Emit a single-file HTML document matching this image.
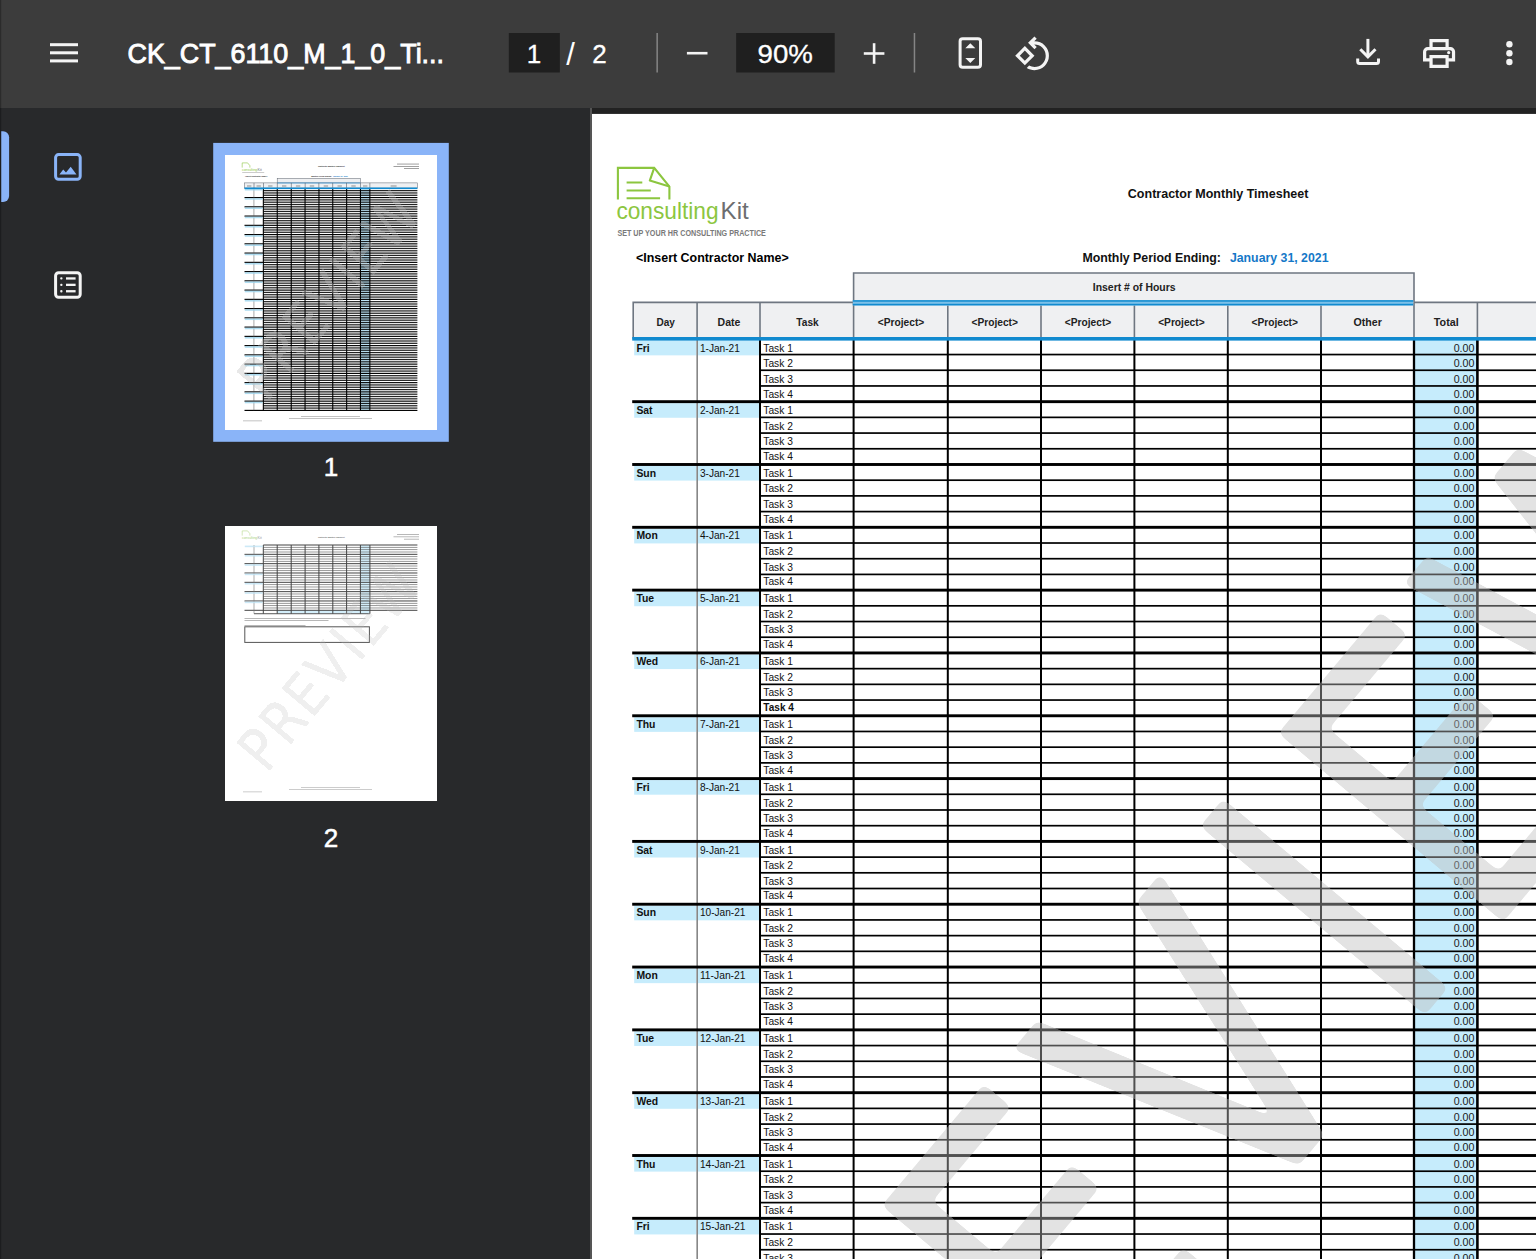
<!DOCTYPE html>
<html lang="en"><head><meta charset="utf-8"><title>CK_CT_6110_M_1_0_Ti...</title>
<style>html,body{margin:0;padding:0;background:#28292b;overflow:hidden}body{width:1536px;height:1259px;position:relative}svg{position:absolute;left:0;top:0;display:block}text{white-space:pre}</style></head><body>
<svg width="1536" height="1259" viewBox="0 0 1536 1259" font-family="Liberation Sans, sans-serif">
<rect width="1536" height="1259" fill="#28292b"/>
<rect x="590" y="108" width="946" height="1151" fill="#222222"/>
<rect x="590" y="108" width="2" height="1151" fill="#555"/>
<defs><filter id="rnd" x="-3%" y="-8%" width="106%" height="116%"><feGaussianBlur stdDeviation="4"/><feComponentTransfer><feFuncA type="linear" slope="14" intercept="-6.5"/></feComponentTransfer></filter><clipPath id="pc"><rect x="592" y="113.7" width="944" height="1146"/></clipPath></defs>
<g clip-path="url(#pc)">
<rect x="592" y="113.7" width="944" height="1145.3" fill="#fff"/>
<g fill="none" stroke="#8cc63f" stroke-width="2.1" stroke-linejoin="miter">
<path d="M617.9 199.6V167.9H654.2L669.4 186.6V199.6"/>
<path d="M654.2 167.9L649.8 180.6L669.4 186.6" stroke-linejoin="round"/>
<path d="M626.6 182.5H642.3M626.6 190.5H650.8M626.6 198.3H660.1" stroke-width="1.9"/>
</g>
<text x="616.4" y="219.4" font-size="23.2" text-anchor="start" fill="#8cc63f" textLength="102.2" lengthAdjust="spacingAndGlyphs" >consulting</text>
<text x="720.6" y="219.4" font-size="23.2" text-anchor="start" fill="#6d6e70" textLength="28.2" lengthAdjust="spacingAndGlyphs" >Kit</text>
<text x="617.4" y="235.5" font-size="8.2" text-anchor="start" fill="#7a7a7a" font-weight="bold" textLength="148.5" lengthAdjust="spacingAndGlyphs" >SET UP YOUR HR CONSULTING PRACTICE</text>
<text x="636.0" y="261.7" font-size="12.6" text-anchor="start" fill="#000" font-weight="bold" textLength="152.7" lengthAdjust="spacingAndGlyphs" >&lt;Insert Contractor Name&gt;</text>
<text x="1127.8" y="198.3" font-size="12.4" text-anchor="start" fill="#111" font-weight="bold" textLength="180.6" lengthAdjust="spacingAndGlyphs" >Contractor Monthly Timesheet</text>
<text x="1082.4" y="261.7" font-size="12.6" text-anchor="start" fill="#111" font-weight="bold" textLength="138.5" lengthAdjust="spacingAndGlyphs" >Monthly Period Ending:</text>
<text x="1229.9" y="261.7" font-size="12.6" text-anchor="start" fill="#1478c8" font-weight="bold" textLength="98.6" lengthAdjust="spacingAndGlyphs" >January 31, 2021</text>
<rect x="853.6" y="273.0" width="560.4" height="32.39999999999998" fill="#eff0f2"/>
<rect x="633.2" y="302.4" width="902.8" height="36.400000000000034" fill="#eff0f2"/>
<g stroke="#6e7681" stroke-width="1.6" fill="none">
<path d="M853.6 304.4V273.0H1414.0V302.4"/>
<path d="M633.2 338.8V302.4H853.6"/>
<path d="M1414.0 302.4H1536"/>
<path d="M697.1 302.4V338.8"/>
<path d="M760.0 302.4V338.8"/>
<path d="M853.6 302.4V338.8"/>
<path d="M947.8 305.4V338.8"/>
<path d="M1041.0 305.4V338.8"/>
<path d="M1134.4 305.4V338.8"/>
<path d="M1227.8 305.4V338.8"/>
<path d="M1321.0 305.4V338.8"/>
<path d="M1414.0 302.4V338.8"/>
<path d="M1477.4 302.4V338.8"/>
</g>
<rect x="852.8000000000001" y="300.2" width="560.4" height="5.2" fill="#7cc0e8"/>
<rect x="852.8000000000001" y="300.2" width="560.4" height="1.5" fill="#118acf"/>
<rect x="852.8000000000001" y="303.8" width="560.4" height="1.6" fill="#118acf"/>
<text x="1134.2" y="291.3" font-size="10.6" text-anchor="middle" fill="#222" font-weight="bold" textLength="82.8" lengthAdjust="spacingAndGlyphs" >Insert # of Hours</text>
<text x="665.7" y="325.8" font-size="10.8" text-anchor="middle" fill="#222" font-weight="bold" textLength="18.4" lengthAdjust="spacingAndGlyphs" >Day</text>
<text x="729.0" y="325.8" font-size="10.8" text-anchor="middle" fill="#222" font-weight="bold" textLength="22.8" lengthAdjust="spacingAndGlyphs" >Date</text>
<text x="807.5" y="325.8" font-size="10.8" text-anchor="middle" fill="#222" font-weight="bold" textLength="22.3" lengthAdjust="spacingAndGlyphs" >Task</text>
<text x="901.0" y="325.8" font-size="10.8" text-anchor="middle" fill="#222" font-weight="bold" textLength="46.5" lengthAdjust="spacingAndGlyphs" >&lt;Project&gt;</text>
<text x="994.7" y="325.8" font-size="10.8" text-anchor="middle" fill="#222" font-weight="bold" textLength="46.5" lengthAdjust="spacingAndGlyphs" >&lt;Project&gt;</text>
<text x="1088.0" y="325.8" font-size="10.8" text-anchor="middle" fill="#222" font-weight="bold" textLength="46.5" lengthAdjust="spacingAndGlyphs" >&lt;Project&gt;</text>
<text x="1181.4" y="325.8" font-size="10.8" text-anchor="middle" fill="#222" font-weight="bold" textLength="46.5" lengthAdjust="spacingAndGlyphs" >&lt;Project&gt;</text>
<text x="1274.7" y="325.8" font-size="10.8" text-anchor="middle" fill="#222" font-weight="bold" textLength="46.5" lengthAdjust="spacingAndGlyphs" >&lt;Project&gt;</text>
<text x="1367.7" y="325.8" font-size="10.8" text-anchor="middle" fill="#222" font-weight="bold" textLength="28.3" lengthAdjust="spacingAndGlyphs" >Other</text>
<text x="1446.3" y="325.8" font-size="10.8" text-anchor="middle" fill="#222" font-weight="bold" textLength="24.9" lengthAdjust="spacingAndGlyphs" >Total</text>
<rect x="634.2" y="340.35" width="62.09999999999998" height="15.0" fill="#c6ecfc"/>
<rect x="697.9" y="340.35" width="61.299999999999976" height="15.0" fill="#c6ecfc"/>
<rect x="634.2" y="403.17" width="62.09999999999998" height="14.6" fill="#c6ecfc"/>
<rect x="697.9" y="403.17" width="61.299999999999976" height="14.6" fill="#c6ecfc"/>
<rect x="634.2" y="465.99" width="62.09999999999998" height="14.6" fill="#c6ecfc"/>
<rect x="697.9" y="465.99" width="61.299999999999976" height="14.6" fill="#c6ecfc"/>
<rect x="634.2" y="528.81" width="62.09999999999998" height="14.6" fill="#c6ecfc"/>
<rect x="697.9" y="528.81" width="61.299999999999976" height="14.6" fill="#c6ecfc"/>
<rect x="634.2" y="591.63" width="62.09999999999998" height="14.6" fill="#c6ecfc"/>
<rect x="697.9" y="591.63" width="61.299999999999976" height="14.6" fill="#c6ecfc"/>
<rect x="634.2" y="654.45" width="62.09999999999998" height="14.6" fill="#c6ecfc"/>
<rect x="697.9" y="654.45" width="61.299999999999976" height="14.6" fill="#c6ecfc"/>
<rect x="634.2" y="717.27" width="62.09999999999998" height="14.6" fill="#c6ecfc"/>
<rect x="697.9" y="717.27" width="61.299999999999976" height="14.6" fill="#c6ecfc"/>
<rect x="634.2" y="780.09" width="62.09999999999998" height="14.6" fill="#c6ecfc"/>
<rect x="697.9" y="780.09" width="61.299999999999976" height="14.6" fill="#c6ecfc"/>
<rect x="634.2" y="842.91" width="62.09999999999998" height="14.6" fill="#c6ecfc"/>
<rect x="697.9" y="842.91" width="61.299999999999976" height="14.6" fill="#c6ecfc"/>
<rect x="634.2" y="905.73" width="62.09999999999998" height="14.6" fill="#c6ecfc"/>
<rect x="697.9" y="905.73" width="61.299999999999976" height="14.6" fill="#c6ecfc"/>
<rect x="634.2" y="968.55" width="62.09999999999998" height="14.6" fill="#c6ecfc"/>
<rect x="697.9" y="968.55" width="61.299999999999976" height="14.6" fill="#c6ecfc"/>
<rect x="634.2" y="1031.37" width="62.09999999999998" height="14.6" fill="#c6ecfc"/>
<rect x="697.9" y="1031.37" width="61.299999999999976" height="14.6" fill="#c6ecfc"/>
<rect x="634.2" y="1094.19" width="62.09999999999998" height="14.6" fill="#c6ecfc"/>
<rect x="697.9" y="1094.19" width="61.299999999999976" height="14.6" fill="#c6ecfc"/>
<rect x="634.2" y="1157.01" width="62.09999999999998" height="14.6" fill="#c6ecfc"/>
<rect x="697.9" y="1157.01" width="61.299999999999976" height="14.6" fill="#c6ecfc"/>
<rect x="634.2" y="1219.83" width="62.09999999999998" height="14.6" fill="#c6ecfc"/>
<rect x="697.9" y="1219.83" width="61.299999999999976" height="14.6" fill="#c6ecfc"/>
<rect x="1414.0" y="338.8" width="63.40000000000009" height="920.2" fill="#c6ecfc"/>
<rect x="696.5" y="338.8" width="1.3" height="920.2" fill="#6a6a6a"/>
<g fill="#000">
<rect x="760.0" y="353.70" width="776.0" height="1.7"/>
<rect x="760.0" y="369.40" width="776.0" height="1.7"/>
<rect x="760.0" y="385.10" width="776.0" height="1.7"/>
<rect x="632.2" y="400.22" width="903.8" height="2.9"/>
<rect x="760.0" y="416.52" width="776.0" height="1.7"/>
<rect x="760.0" y="432.22" width="776.0" height="1.7"/>
<rect x="760.0" y="447.92" width="776.0" height="1.7"/>
<rect x="632.2" y="463.04" width="903.8" height="2.9"/>
<rect x="760.0" y="479.34" width="776.0" height="1.7"/>
<rect x="760.0" y="495.04" width="776.0" height="1.7"/>
<rect x="760.0" y="510.74" width="776.0" height="1.7"/>
<rect x="632.2" y="525.86" width="903.8" height="2.9"/>
<rect x="760.0" y="542.16" width="776.0" height="1.7"/>
<rect x="760.0" y="557.86" width="776.0" height="1.7"/>
<rect x="760.0" y="573.56" width="776.0" height="1.7"/>
<rect x="632.2" y="588.68" width="903.8" height="2.9"/>
<rect x="760.0" y="604.98" width="776.0" height="1.7"/>
<rect x="760.0" y="620.68" width="776.0" height="1.7"/>
<rect x="760.0" y="636.38" width="776.0" height="1.7"/>
<rect x="632.2" y="651.50" width="903.8" height="2.9"/>
<rect x="760.0" y="667.80" width="776.0" height="1.7"/>
<rect x="760.0" y="683.50" width="776.0" height="1.7"/>
<rect x="760.0" y="699.20" width="776.0" height="1.7"/>
<rect x="632.2" y="714.32" width="903.8" height="2.9"/>
<rect x="760.0" y="730.62" width="776.0" height="1.7"/>
<rect x="760.0" y="746.32" width="776.0" height="1.7"/>
<rect x="760.0" y="762.02" width="776.0" height="1.7"/>
<rect x="632.2" y="777.14" width="903.8" height="2.9"/>
<rect x="760.0" y="793.44" width="776.0" height="1.7"/>
<rect x="760.0" y="809.14" width="776.0" height="1.7"/>
<rect x="760.0" y="824.84" width="776.0" height="1.7"/>
<rect x="632.2" y="839.96" width="903.8" height="2.9"/>
<rect x="760.0" y="856.26" width="776.0" height="1.7"/>
<rect x="760.0" y="871.96" width="776.0" height="1.7"/>
<rect x="760.0" y="887.66" width="776.0" height="1.7"/>
<rect x="632.2" y="902.78" width="903.8" height="2.9"/>
<rect x="760.0" y="919.08" width="776.0" height="1.7"/>
<rect x="760.0" y="934.78" width="776.0" height="1.7"/>
<rect x="760.0" y="950.48" width="776.0" height="1.7"/>
<rect x="632.2" y="965.60" width="903.8" height="2.9"/>
<rect x="760.0" y="981.90" width="776.0" height="1.7"/>
<rect x="760.0" y="997.60" width="776.0" height="1.7"/>
<rect x="760.0" y="1013.30" width="776.0" height="1.7"/>
<rect x="632.2" y="1028.42" width="903.8" height="2.9"/>
<rect x="760.0" y="1044.72" width="776.0" height="1.7"/>
<rect x="760.0" y="1060.42" width="776.0" height="1.7"/>
<rect x="760.0" y="1076.12" width="776.0" height="1.7"/>
<rect x="632.2" y="1091.24" width="903.8" height="2.9"/>
<rect x="760.0" y="1107.54" width="776.0" height="1.7"/>
<rect x="760.0" y="1123.24" width="776.0" height="1.7"/>
<rect x="760.0" y="1138.94" width="776.0" height="1.7"/>
<rect x="632.2" y="1154.06" width="903.8" height="2.9"/>
<rect x="760.0" y="1170.36" width="776.0" height="1.7"/>
<rect x="760.0" y="1186.06" width="776.0" height="1.7"/>
<rect x="760.0" y="1201.76" width="776.0" height="1.7"/>
<rect x="632.2" y="1216.88" width="903.8" height="2.9"/>
<rect x="760.0" y="1233.18" width="776.0" height="1.7"/>
<rect x="760.0" y="1248.88" width="776.0" height="1.7"/>
<rect x="759.00" y="338.8" width="2.0" height="920.2"/>
<rect x="852.60" y="338.8" width="2.0" height="920.2"/>
<rect x="946.80" y="338.8" width="2.0" height="920.2"/>
<rect x="1040.00" y="338.8" width="2.0" height="920.2"/>
<rect x="1133.40" y="338.8" width="2.0" height="920.2"/>
<rect x="1226.80" y="338.8" width="2.0" height="920.2"/>
<rect x="1320.00" y="338.8" width="2.0" height="920.2"/>
<rect x="1412.85" y="338.8" width="2.3" height="920.2"/>
<rect x="1476.10" y="338.8" width="2.6" height="920.2"/>
</g>
<rect x="632.2" y="337.0" width="903.8" height="3.6" fill="#118acf"/>
<text x="636.4" y="351.5" font-size="10.4" text-anchor="start" fill="#111" font-weight="bold" >Fri</text>
<text x="699.9" y="351.5" font-size="10.6" text-anchor="start" fill="#111" textLength="40.0" lengthAdjust="spacingAndGlyphs" >1-Jan-21</text>
<text x="763.3" y="351.5" font-size="10.6" text-anchor="start" fill="#111" textLength="29.6" lengthAdjust="spacingAndGlyphs" >Task 1</text>
<text x="1474.4" y="351.5" font-size="10.6" text-anchor="end" fill="#1a1a1a" textLength="20.7" lengthAdjust="spacingAndGlyphs" >0.00</text>
<text x="763.3" y="367.1" font-size="10.6" text-anchor="start" fill="#111" textLength="29.6" lengthAdjust="spacingAndGlyphs" >Task 2</text>
<text x="1474.4" y="367.1" font-size="10.6" text-anchor="end" fill="#1a1a1a" textLength="20.7" lengthAdjust="spacingAndGlyphs" >0.00</text>
<text x="763.3" y="382.6" font-size="10.6" text-anchor="start" fill="#111" textLength="29.6" lengthAdjust="spacingAndGlyphs" >Task 3</text>
<text x="1474.4" y="382.6" font-size="10.6" text-anchor="end" fill="#1a1a1a" textLength="20.7" lengthAdjust="spacingAndGlyphs" >0.00</text>
<text x="763.3" y="397.5" font-size="10.6" text-anchor="start" fill="#111" textLength="29.6" lengthAdjust="spacingAndGlyphs" >Task 4</text>
<text x="1474.4" y="397.5" font-size="10.6" text-anchor="end" fill="#1a1a1a" textLength="20.7" lengthAdjust="spacingAndGlyphs" >0.00</text>
<text x="636.4" y="413.8" font-size="10.4" text-anchor="start" fill="#111" font-weight="bold" >Sat</text>
<text x="699.9" y="413.8" font-size="10.6" text-anchor="start" fill="#111" textLength="40.0" lengthAdjust="spacingAndGlyphs" >2-Jan-21</text>
<text x="763.3" y="413.8" font-size="10.6" text-anchor="start" fill="#111" textLength="29.6" lengthAdjust="spacingAndGlyphs" >Task 1</text>
<text x="1474.4" y="413.8" font-size="10.6" text-anchor="end" fill="#1a1a1a" textLength="20.7" lengthAdjust="spacingAndGlyphs" >0.00</text>
<text x="763.3" y="429.6" font-size="10.6" text-anchor="start" fill="#111" textLength="29.6" lengthAdjust="spacingAndGlyphs" >Task 2</text>
<text x="1474.4" y="429.6" font-size="10.6" text-anchor="end" fill="#1a1a1a" textLength="20.7" lengthAdjust="spacingAndGlyphs" >0.00</text>
<text x="763.3" y="444.9" font-size="10.6" text-anchor="start" fill="#111" textLength="29.6" lengthAdjust="spacingAndGlyphs" >Task 3</text>
<text x="1474.4" y="444.9" font-size="10.6" text-anchor="end" fill="#1a1a1a" textLength="20.7" lengthAdjust="spacingAndGlyphs" >0.00</text>
<text x="763.3" y="459.7" font-size="10.6" text-anchor="start" fill="#111" textLength="29.6" lengthAdjust="spacingAndGlyphs" >Task 4</text>
<text x="1474.4" y="459.7" font-size="10.6" text-anchor="end" fill="#1a1a1a" textLength="20.7" lengthAdjust="spacingAndGlyphs" >0.00</text>
<text x="636.4" y="476.6" font-size="10.4" text-anchor="start" fill="#111" font-weight="bold" >Sun</text>
<text x="699.9" y="476.6" font-size="10.6" text-anchor="start" fill="#111" textLength="40.0" lengthAdjust="spacingAndGlyphs" >3-Jan-21</text>
<text x="763.3" y="476.6" font-size="10.6" text-anchor="start" fill="#111" textLength="29.6" lengthAdjust="spacingAndGlyphs" >Task 1</text>
<text x="1474.4" y="476.6" font-size="10.6" text-anchor="end" fill="#1a1a1a" textLength="20.7" lengthAdjust="spacingAndGlyphs" >0.00</text>
<text x="763.3" y="492.4" font-size="10.6" text-anchor="start" fill="#111" textLength="29.6" lengthAdjust="spacingAndGlyphs" >Task 2</text>
<text x="1474.4" y="492.4" font-size="10.6" text-anchor="end" fill="#1a1a1a" textLength="20.7" lengthAdjust="spacingAndGlyphs" >0.00</text>
<text x="763.3" y="507.7" font-size="10.6" text-anchor="start" fill="#111" textLength="29.6" lengthAdjust="spacingAndGlyphs" >Task 3</text>
<text x="1474.4" y="507.7" font-size="10.6" text-anchor="end" fill="#1a1a1a" textLength="20.7" lengthAdjust="spacingAndGlyphs" >0.00</text>
<text x="763.3" y="522.5" font-size="10.6" text-anchor="start" fill="#111" textLength="29.6" lengthAdjust="spacingAndGlyphs" >Task 4</text>
<text x="1474.4" y="522.5" font-size="10.6" text-anchor="end" fill="#1a1a1a" textLength="20.7" lengthAdjust="spacingAndGlyphs" >0.00</text>
<text x="636.4" y="539.4" font-size="10.4" text-anchor="start" fill="#111" font-weight="bold" >Mon</text>
<text x="699.9" y="539.4" font-size="10.6" text-anchor="start" fill="#111" textLength="40.0" lengthAdjust="spacingAndGlyphs" >4-Jan-21</text>
<text x="763.3" y="539.4" font-size="10.6" text-anchor="start" fill="#111" textLength="29.6" lengthAdjust="spacingAndGlyphs" >Task 1</text>
<text x="1474.4" y="539.4" font-size="10.6" text-anchor="end" fill="#1a1a1a" textLength="20.7" lengthAdjust="spacingAndGlyphs" >0.00</text>
<text x="763.3" y="555.2" font-size="10.6" text-anchor="start" fill="#111" textLength="29.6" lengthAdjust="spacingAndGlyphs" >Task 2</text>
<text x="1474.4" y="555.2" font-size="10.6" text-anchor="end" fill="#1a1a1a" textLength="20.7" lengthAdjust="spacingAndGlyphs" >0.00</text>
<text x="763.3" y="570.5" font-size="10.6" text-anchor="start" fill="#111" textLength="29.6" lengthAdjust="spacingAndGlyphs" >Task 3</text>
<text x="1474.4" y="570.5" font-size="10.6" text-anchor="end" fill="#1a1a1a" textLength="20.7" lengthAdjust="spacingAndGlyphs" >0.00</text>
<text x="763.3" y="585.3" font-size="10.6" text-anchor="start" fill="#111" textLength="29.6" lengthAdjust="spacingAndGlyphs" >Task 4</text>
<text x="1474.4" y="585.3" font-size="10.6" text-anchor="end" fill="#1a1a1a" textLength="20.7" lengthAdjust="spacingAndGlyphs" >0.00</text>
<text x="636.4" y="602.2" font-size="10.4" text-anchor="start" fill="#111" font-weight="bold" >Tue</text>
<text x="699.9" y="602.2" font-size="10.6" text-anchor="start" fill="#111" textLength="40.0" lengthAdjust="spacingAndGlyphs" >5-Jan-21</text>
<text x="763.3" y="602.2" font-size="10.6" text-anchor="start" fill="#111" textLength="29.6" lengthAdjust="spacingAndGlyphs" >Task 1</text>
<text x="1474.4" y="602.2" font-size="10.6" text-anchor="end" fill="#1a1a1a" textLength="20.7" lengthAdjust="spacingAndGlyphs" >0.00</text>
<text x="763.3" y="618.0" font-size="10.6" text-anchor="start" fill="#111" textLength="29.6" lengthAdjust="spacingAndGlyphs" >Task 2</text>
<text x="1474.4" y="618.0" font-size="10.6" text-anchor="end" fill="#1a1a1a" textLength="20.7" lengthAdjust="spacingAndGlyphs" >0.00</text>
<text x="763.3" y="633.3" font-size="10.6" text-anchor="start" fill="#111" textLength="29.6" lengthAdjust="spacingAndGlyphs" >Task 3</text>
<text x="1474.4" y="633.3" font-size="10.6" text-anchor="end" fill="#1a1a1a" textLength="20.7" lengthAdjust="spacingAndGlyphs" >0.00</text>
<text x="763.3" y="648.1" font-size="10.6" text-anchor="start" fill="#111" textLength="29.6" lengthAdjust="spacingAndGlyphs" >Task 4</text>
<text x="1474.4" y="648.1" font-size="10.6" text-anchor="end" fill="#1a1a1a" textLength="20.7" lengthAdjust="spacingAndGlyphs" >0.00</text>
<text x="636.4" y="665.1" font-size="10.4" text-anchor="start" fill="#111" font-weight="bold" >Wed</text>
<text x="699.9" y="665.1" font-size="10.6" text-anchor="start" fill="#111" textLength="40.0" lengthAdjust="spacingAndGlyphs" >6-Jan-21</text>
<text x="763.3" y="665.1" font-size="10.6" text-anchor="start" fill="#111" textLength="29.6" lengthAdjust="spacingAndGlyphs" >Task 1</text>
<text x="1474.4" y="665.1" font-size="10.6" text-anchor="end" fill="#1a1a1a" textLength="20.7" lengthAdjust="spacingAndGlyphs" >0.00</text>
<text x="763.3" y="680.9" font-size="10.6" text-anchor="start" fill="#111" textLength="29.6" lengthAdjust="spacingAndGlyphs" >Task 2</text>
<text x="1474.4" y="680.9" font-size="10.6" text-anchor="end" fill="#1a1a1a" textLength="20.7" lengthAdjust="spacingAndGlyphs" >0.00</text>
<text x="763.3" y="696.2" font-size="10.6" text-anchor="start" fill="#111" textLength="29.6" lengthAdjust="spacingAndGlyphs" >Task 3</text>
<text x="1474.4" y="696.2" font-size="10.6" text-anchor="end" fill="#1a1a1a" textLength="20.7" lengthAdjust="spacingAndGlyphs" >0.00</text>
<text x="763.3" y="711.0" font-size="10.6" text-anchor="start" fill="#111" font-weight="bold" textLength="30.6" lengthAdjust="spacingAndGlyphs" >Task 4</text>
<text x="1474.4" y="711.0" font-size="10.6" text-anchor="end" fill="#1a1a1a" textLength="20.7" lengthAdjust="spacingAndGlyphs" >0.00</text>
<text x="636.4" y="727.9" font-size="10.4" text-anchor="start" fill="#111" font-weight="bold" >Thu</text>
<text x="699.9" y="727.9" font-size="10.6" text-anchor="start" fill="#111" textLength="40.0" lengthAdjust="spacingAndGlyphs" >7-Jan-21</text>
<text x="763.3" y="727.9" font-size="10.6" text-anchor="start" fill="#111" textLength="29.6" lengthAdjust="spacingAndGlyphs" >Task 1</text>
<text x="1474.4" y="727.9" font-size="10.6" text-anchor="end" fill="#1a1a1a" textLength="20.7" lengthAdjust="spacingAndGlyphs" >0.00</text>
<text x="763.3" y="743.7" font-size="10.6" text-anchor="start" fill="#111" textLength="29.6" lengthAdjust="spacingAndGlyphs" >Task 2</text>
<text x="1474.4" y="743.7" font-size="10.6" text-anchor="end" fill="#1a1a1a" textLength="20.7" lengthAdjust="spacingAndGlyphs" >0.00</text>
<text x="763.3" y="759.0" font-size="10.6" text-anchor="start" fill="#111" textLength="29.6" lengthAdjust="spacingAndGlyphs" >Task 3</text>
<text x="1474.4" y="759.0" font-size="10.6" text-anchor="end" fill="#1a1a1a" textLength="20.7" lengthAdjust="spacingAndGlyphs" >0.00</text>
<text x="763.3" y="773.8" font-size="10.6" text-anchor="start" fill="#111" textLength="29.6" lengthAdjust="spacingAndGlyphs" >Task 4</text>
<text x="1474.4" y="773.8" font-size="10.6" text-anchor="end" fill="#1a1a1a" textLength="20.7" lengthAdjust="spacingAndGlyphs" >0.00</text>
<text x="636.4" y="790.7" font-size="10.4" text-anchor="start" fill="#111" font-weight="bold" >Fri</text>
<text x="699.9" y="790.7" font-size="10.6" text-anchor="start" fill="#111" textLength="40.0" lengthAdjust="spacingAndGlyphs" >8-Jan-21</text>
<text x="763.3" y="790.7" font-size="10.6" text-anchor="start" fill="#111" textLength="29.6" lengthAdjust="spacingAndGlyphs" >Task 1</text>
<text x="1474.4" y="790.7" font-size="10.6" text-anchor="end" fill="#1a1a1a" textLength="20.7" lengthAdjust="spacingAndGlyphs" >0.00</text>
<text x="763.3" y="806.5" font-size="10.6" text-anchor="start" fill="#111" textLength="29.6" lengthAdjust="spacingAndGlyphs" >Task 2</text>
<text x="1474.4" y="806.5" font-size="10.6" text-anchor="end" fill="#1a1a1a" textLength="20.7" lengthAdjust="spacingAndGlyphs" >0.00</text>
<text x="763.3" y="821.8" font-size="10.6" text-anchor="start" fill="#111" textLength="29.6" lengthAdjust="spacingAndGlyphs" >Task 3</text>
<text x="1474.4" y="821.8" font-size="10.6" text-anchor="end" fill="#1a1a1a" textLength="20.7" lengthAdjust="spacingAndGlyphs" >0.00</text>
<text x="763.3" y="836.6" font-size="10.6" text-anchor="start" fill="#111" textLength="29.6" lengthAdjust="spacingAndGlyphs" >Task 4</text>
<text x="1474.4" y="836.6" font-size="10.6" text-anchor="end" fill="#1a1a1a" textLength="20.7" lengthAdjust="spacingAndGlyphs" >0.00</text>
<text x="636.4" y="853.5" font-size="10.4" text-anchor="start" fill="#111" font-weight="bold" >Sat</text>
<text x="699.9" y="853.5" font-size="10.6" text-anchor="start" fill="#111" textLength="40.0" lengthAdjust="spacingAndGlyphs" >9-Jan-21</text>
<text x="763.3" y="853.5" font-size="10.6" text-anchor="start" fill="#111" textLength="29.6" lengthAdjust="spacingAndGlyphs" >Task 1</text>
<text x="1474.4" y="853.5" font-size="10.6" text-anchor="end" fill="#1a1a1a" textLength="20.7" lengthAdjust="spacingAndGlyphs" >0.00</text>
<text x="763.3" y="869.3" font-size="10.6" text-anchor="start" fill="#111" textLength="29.6" lengthAdjust="spacingAndGlyphs" >Task 2</text>
<text x="1474.4" y="869.3" font-size="10.6" text-anchor="end" fill="#1a1a1a" textLength="20.7" lengthAdjust="spacingAndGlyphs" >0.00</text>
<text x="763.3" y="884.6" font-size="10.6" text-anchor="start" fill="#111" textLength="29.6" lengthAdjust="spacingAndGlyphs" >Task 3</text>
<text x="1474.4" y="884.6" font-size="10.6" text-anchor="end" fill="#1a1a1a" textLength="20.7" lengthAdjust="spacingAndGlyphs" >0.00</text>
<text x="763.3" y="899.4" font-size="10.6" text-anchor="start" fill="#111" textLength="29.6" lengthAdjust="spacingAndGlyphs" >Task 4</text>
<text x="1474.4" y="899.4" font-size="10.6" text-anchor="end" fill="#1a1a1a" textLength="20.7" lengthAdjust="spacingAndGlyphs" >0.00</text>
<text x="636.4" y="916.3" font-size="10.4" text-anchor="start" fill="#111" font-weight="bold" >Sun</text>
<text x="699.9" y="916.3" font-size="10.6" text-anchor="start" fill="#111" textLength="45.6" lengthAdjust="spacingAndGlyphs" >10-Jan-21</text>
<text x="763.3" y="916.3" font-size="10.6" text-anchor="start" fill="#111" textLength="29.6" lengthAdjust="spacingAndGlyphs" >Task 1</text>
<text x="1474.4" y="916.3" font-size="10.6" text-anchor="end" fill="#1a1a1a" textLength="20.7" lengthAdjust="spacingAndGlyphs" >0.00</text>
<text x="763.3" y="932.1" font-size="10.6" text-anchor="start" fill="#111" textLength="29.6" lengthAdjust="spacingAndGlyphs" >Task 2</text>
<text x="1474.4" y="932.1" font-size="10.6" text-anchor="end" fill="#1a1a1a" textLength="20.7" lengthAdjust="spacingAndGlyphs" >0.00</text>
<text x="763.3" y="947.4" font-size="10.6" text-anchor="start" fill="#111" textLength="29.6" lengthAdjust="spacingAndGlyphs" >Task 3</text>
<text x="1474.4" y="947.4" font-size="10.6" text-anchor="end" fill="#1a1a1a" textLength="20.7" lengthAdjust="spacingAndGlyphs" >0.00</text>
<text x="763.3" y="962.2" font-size="10.6" text-anchor="start" fill="#111" textLength="29.6" lengthAdjust="spacingAndGlyphs" >Task 4</text>
<text x="1474.4" y="962.2" font-size="10.6" text-anchor="end" fill="#1a1a1a" textLength="20.7" lengthAdjust="spacingAndGlyphs" >0.00</text>
<text x="636.4" y="979.2" font-size="10.4" text-anchor="start" fill="#111" font-weight="bold" >Mon</text>
<text x="699.9" y="979.2" font-size="10.6" text-anchor="start" fill="#111" textLength="45.6" lengthAdjust="spacingAndGlyphs" >11-Jan-21</text>
<text x="763.3" y="979.2" font-size="10.6" text-anchor="start" fill="#111" textLength="29.6" lengthAdjust="spacingAndGlyphs" >Task 1</text>
<text x="1474.4" y="979.2" font-size="10.6" text-anchor="end" fill="#1a1a1a" textLength="20.7" lengthAdjust="spacingAndGlyphs" >0.00</text>
<text x="763.3" y="995.0" font-size="10.6" text-anchor="start" fill="#111" textLength="29.6" lengthAdjust="spacingAndGlyphs" >Task 2</text>
<text x="1474.4" y="995.0" font-size="10.6" text-anchor="end" fill="#1a1a1a" textLength="20.7" lengthAdjust="spacingAndGlyphs" >0.00</text>
<text x="763.3" y="1010.3" font-size="10.6" text-anchor="start" fill="#111" textLength="29.6" lengthAdjust="spacingAndGlyphs" >Task 3</text>
<text x="1474.4" y="1010.3" font-size="10.6" text-anchor="end" fill="#1a1a1a" textLength="20.7" lengthAdjust="spacingAndGlyphs" >0.00</text>
<text x="763.3" y="1025.1" font-size="10.6" text-anchor="start" fill="#111" textLength="29.6" lengthAdjust="spacingAndGlyphs" >Task 4</text>
<text x="1474.4" y="1025.1" font-size="10.6" text-anchor="end" fill="#1a1a1a" textLength="20.7" lengthAdjust="spacingAndGlyphs" >0.00</text>
<text x="636.4" y="1042.0" font-size="10.4" text-anchor="start" fill="#111" font-weight="bold" >Tue</text>
<text x="699.9" y="1042.0" font-size="10.6" text-anchor="start" fill="#111" textLength="45.6" lengthAdjust="spacingAndGlyphs" >12-Jan-21</text>
<text x="763.3" y="1042.0" font-size="10.6" text-anchor="start" fill="#111" textLength="29.6" lengthAdjust="spacingAndGlyphs" >Task 1</text>
<text x="1474.4" y="1042.0" font-size="10.6" text-anchor="end" fill="#1a1a1a" textLength="20.7" lengthAdjust="spacingAndGlyphs" >0.00</text>
<text x="763.3" y="1057.8" font-size="10.6" text-anchor="start" fill="#111" textLength="29.6" lengthAdjust="spacingAndGlyphs" >Task 2</text>
<text x="1474.4" y="1057.8" font-size="10.6" text-anchor="end" fill="#1a1a1a" textLength="20.7" lengthAdjust="spacingAndGlyphs" >0.00</text>
<text x="763.3" y="1073.1" font-size="10.6" text-anchor="start" fill="#111" textLength="29.6" lengthAdjust="spacingAndGlyphs" >Task 3</text>
<text x="1474.4" y="1073.1" font-size="10.6" text-anchor="end" fill="#1a1a1a" textLength="20.7" lengthAdjust="spacingAndGlyphs" >0.00</text>
<text x="763.3" y="1087.9" font-size="10.6" text-anchor="start" fill="#111" textLength="29.6" lengthAdjust="spacingAndGlyphs" >Task 4</text>
<text x="1474.4" y="1087.9" font-size="10.6" text-anchor="end" fill="#1a1a1a" textLength="20.7" lengthAdjust="spacingAndGlyphs" >0.00</text>
<text x="636.4" y="1104.8" font-size="10.4" text-anchor="start" fill="#111" font-weight="bold" >Wed</text>
<text x="699.9" y="1104.8" font-size="10.6" text-anchor="start" fill="#111" textLength="45.6" lengthAdjust="spacingAndGlyphs" >13-Jan-21</text>
<text x="763.3" y="1104.8" font-size="10.6" text-anchor="start" fill="#111" textLength="29.6" lengthAdjust="spacingAndGlyphs" >Task 1</text>
<text x="1474.4" y="1104.8" font-size="10.6" text-anchor="end" fill="#1a1a1a" textLength="20.7" lengthAdjust="spacingAndGlyphs" >0.00</text>
<text x="763.3" y="1120.6" font-size="10.6" text-anchor="start" fill="#111" textLength="29.6" lengthAdjust="spacingAndGlyphs" >Task 2</text>
<text x="1474.4" y="1120.6" font-size="10.6" text-anchor="end" fill="#1a1a1a" textLength="20.7" lengthAdjust="spacingAndGlyphs" >0.00</text>
<text x="763.3" y="1135.9" font-size="10.6" text-anchor="start" fill="#111" textLength="29.6" lengthAdjust="spacingAndGlyphs" >Task 3</text>
<text x="1474.4" y="1135.9" font-size="10.6" text-anchor="end" fill="#1a1a1a" textLength="20.7" lengthAdjust="spacingAndGlyphs" >0.00</text>
<text x="763.3" y="1150.7" font-size="10.6" text-anchor="start" fill="#111" textLength="29.6" lengthAdjust="spacingAndGlyphs" >Task 4</text>
<text x="1474.4" y="1150.7" font-size="10.6" text-anchor="end" fill="#1a1a1a" textLength="20.7" lengthAdjust="spacingAndGlyphs" >0.00</text>
<text x="636.4" y="1167.6" font-size="10.4" text-anchor="start" fill="#111" font-weight="bold" >Thu</text>
<text x="699.9" y="1167.6" font-size="10.6" text-anchor="start" fill="#111" textLength="45.6" lengthAdjust="spacingAndGlyphs" >14-Jan-21</text>
<text x="763.3" y="1167.6" font-size="10.6" text-anchor="start" fill="#111" textLength="29.6" lengthAdjust="spacingAndGlyphs" >Task 1</text>
<text x="1474.4" y="1167.6" font-size="10.6" text-anchor="end" fill="#1a1a1a" textLength="20.7" lengthAdjust="spacingAndGlyphs" >0.00</text>
<text x="763.3" y="1183.4" font-size="10.6" text-anchor="start" fill="#111" textLength="29.6" lengthAdjust="spacingAndGlyphs" >Task 2</text>
<text x="1474.4" y="1183.4" font-size="10.6" text-anchor="end" fill="#1a1a1a" textLength="20.7" lengthAdjust="spacingAndGlyphs" >0.00</text>
<text x="763.3" y="1198.7" font-size="10.6" text-anchor="start" fill="#111" textLength="29.6" lengthAdjust="spacingAndGlyphs" >Task 3</text>
<text x="1474.4" y="1198.7" font-size="10.6" text-anchor="end" fill="#1a1a1a" textLength="20.7" lengthAdjust="spacingAndGlyphs" >0.00</text>
<text x="763.3" y="1213.5" font-size="10.6" text-anchor="start" fill="#111" textLength="29.6" lengthAdjust="spacingAndGlyphs" >Task 4</text>
<text x="1474.4" y="1213.5" font-size="10.6" text-anchor="end" fill="#1a1a1a" textLength="20.7" lengthAdjust="spacingAndGlyphs" >0.00</text>
<text x="636.4" y="1230.4" font-size="10.4" text-anchor="start" fill="#111" font-weight="bold" >Fri</text>
<text x="699.9" y="1230.4" font-size="10.6" text-anchor="start" fill="#111" textLength="45.6" lengthAdjust="spacingAndGlyphs" >15-Jan-21</text>
<text x="763.3" y="1230.4" font-size="10.6" text-anchor="start" fill="#111" textLength="29.6" lengthAdjust="spacingAndGlyphs" >Task 1</text>
<text x="1474.4" y="1230.4" font-size="10.6" text-anchor="end" fill="#1a1a1a" textLength="20.7" lengthAdjust="spacingAndGlyphs" >0.00</text>
<text x="763.3" y="1246.2" font-size="10.6" text-anchor="start" fill="#111" textLength="29.6" lengthAdjust="spacingAndGlyphs" >Task 2</text>
<text x="1474.4" y="1246.2" font-size="10.6" text-anchor="end" fill="#1a1a1a" textLength="20.7" lengthAdjust="spacingAndGlyphs" >0.00</text>
<text x="763.3" y="1261.5" font-size="10.6" text-anchor="start" fill="#111" textLength="29.6" lengthAdjust="spacingAndGlyphs" >Task 3</text>
<text x="1474.4" y="1261.5" font-size="10.6" text-anchor="end" fill="#1a1a1a" textLength="20.7" lengthAdjust="spacingAndGlyphs" >0.00</text>
<g transform="translate(778.5 1783.3) rotate(-50)" opacity="0.42"><text transform="scale(0.85 1)" x="0 269.4 560.9 837.3 1143.6 1286.5 1542.2" y="0" font-size="399" font-family="DejaVu Sans, Liberation Sans, sans-serif" fill="#bebebe" stroke="#bebebe" stroke-width="3" stroke-linejoin="round" filter="url(#rnd)">PREVIEW</text></g>
</g>
<path d="M1.2 131.3H3.1a6 6 0 0 1 6 6V196a6 6 0 0 1-6 6H1.2Z" fill="#8ab4f8"/>
<rect x="55.6" y="154.6" width="24.6" height="24.6" rx="3" fill="none" stroke="#8ab4f8" stroke-width="3"/>
<path d="M59.4 174.6L63.2 169.4L66 172.6L70.7 166.8L76.5 174.6Z" fill="#8ab4f8"/>
<rect x="55.6" y="272.7" width="24.6" height="24.6" rx="3" fill="none" stroke="#f4f4f4" stroke-width="3"/>
<rect x="60.2" y="277.3" width="2.3" height="2.3" rx="1" fill="#f4f4f4"/><rect x="66" y="277.3" width="9.6" height="2.3" fill="#f4f4f4"/>
<rect x="60.2" y="283.7" width="2.3" height="2.3" rx="1" fill="#f4f4f4"/><rect x="66" y="283.7" width="9.6" height="2.3" fill="#f4f4f4"/>
<rect x="60.2" y="290.1" width="2.3" height="2.3" rx="1" fill="#f4f4f4"/><rect x="66" y="290.1" width="9.6" height="2.3" fill="#f4f4f4"/>
<rect x="213.2" y="142.9" width="235.6" height="298.9" fill="#8ab4f8"/>
<clipPath id="t1c"><rect x="225" y="155" width="212" height="275"/></clipPath><rect x="225" y="155" width="212" height="275" fill="#fff"/>
<g fill="none" stroke="#8cc63f" stroke-width="0.6"><path d="M242.2 167.6V162.9H247.6L249.9 165.7V167.6"/></g>
<text x="242.0" y="170.6" font-size="3.5" fill="#8cc63f" textLength="15.2" lengthAdjust="spacingAndGlyphs">consulting</text>
<text x="257.5" y="170.6" font-size="3.5" fill="#6d6e70" textLength="4.2" lengthAdjust="spacingAndGlyphs">Kit</text>
<rect x="242.2" y="172.1" width="22" height="0.6" fill="#aaa"/>
<text x="317.9" y="167.4" font-size="1.9" font-weight="bold" fill="#222" textLength="26.8" lengthAdjust="spacingAndGlyphs">Contractor Monthly Timesheet</text>
<text x="244.9" y="176.8" font-size="1.9" font-weight="bold" fill="#222" textLength="22.7" lengthAdjust="spacingAndGlyphs">&lt;Insert Contractor Name&gt;</text>
<text x="311.2" y="176.8" font-size="1.9" font-weight="bold" fill="#222" textLength="20.6" lengthAdjust="spacingAndGlyphs">Monthly Period Ending:</text>
<text x="333.1" y="176.8" font-size="1.9" font-weight="bold" fill="#1478c8" textLength="14.6" lengthAdjust="spacingAndGlyphs">January 31, 2021</text>
<g fill="#777"><rect x="397" y="163.7" width="22" height="0.7"/><rect x="393.5" y="166" width="25.5" height="0.7"/><rect x="404" y="168.3" width="15" height="0.7"/></g>
<rect x="277.2" y="178.5" width="83.2" height="4.6" fill="#eff0f2" stroke="#59616b" stroke-width="0.5"/>
<rect x="244.5" y="182.9" width="172.9" height="5.2" fill="#eff0f2" stroke="#59616b" stroke-width="0.5"/>
<rect x="277.2" y="182.6" width="83.2" height="0.8" fill="#3c9fdb"/>
<rect x="253.7" y="182.9" width="0.6" height="5.2" fill="#59616b"/>
<rect x="263.0" y="182.9" width="0.6" height="5.2" fill="#59616b"/>
<rect x="276.9" y="182.9" width="0.6" height="5.2" fill="#59616b"/>
<rect x="290.9" y="182.9" width="0.6" height="5.2" fill="#59616b"/>
<rect x="304.8" y="182.9" width="0.6" height="5.2" fill="#59616b"/>
<rect x="318.6" y="182.9" width="0.6" height="5.2" fill="#59616b"/>
<rect x="332.5" y="182.9" width="0.6" height="5.2" fill="#59616b"/>
<rect x="346.3" y="182.9" width="0.6" height="5.2" fill="#59616b"/>
<rect x="360.1" y="182.9" width="0.6" height="5.2" fill="#59616b"/>
<rect x="369.6" y="182.9" width="0.6" height="5.2" fill="#59616b"/>
<rect x="247.0" y="185.6" width="4.4" height="0.8" fill="#777"/>
<rect x="256.5" y="185.6" width="4.4" height="0.8" fill="#777"/>
<rect x="268.1" y="185.6" width="4.4" height="0.8" fill="#777"/>
<rect x="282.0" y="185.6" width="4.4" height="0.8" fill="#777"/>
<rect x="295.9" y="185.6" width="4.4" height="0.8" fill="#777"/>
<rect x="309.8" y="185.6" width="4.4" height="0.8" fill="#777"/>
<rect x="323.7" y="185.6" width="4.4" height="0.8" fill="#777"/>
<rect x="337.5" y="185.6" width="4.4" height="0.8" fill="#777"/>
<rect x="351.3" y="185.6" width="4.4" height="0.8" fill="#777"/>
<rect x="363.0" y="185.6" width="4.4" height="0.8" fill="#777"/>
<rect x="390.6" y="185.6" width="6" height="0.8" fill="#777"/>
<rect x="360.4" y="188.3" width="9.4" height="222.1" fill="#bfe6f7"/>
<g fill="#000" opacity="0.86">
<rect x="263.3" y="190.01" width="154.1" height="1.25"/>
<rect x="263.3" y="192.33" width="154.1" height="1.25"/>
<rect x="263.3" y="194.64" width="154.1" height="1.25"/>
<rect x="263.3" y="199.27" width="154.1" height="1.25"/>
<rect x="263.3" y="201.58" width="154.1" height="1.25"/>
<rect x="263.3" y="203.89" width="154.1" height="1.25"/>
<rect x="263.3" y="208.52" width="154.1" height="1.25"/>
<rect x="263.3" y="210.83" width="154.1" height="1.25"/>
<rect x="263.3" y="213.14" width="154.1" height="1.25"/>
<rect x="263.3" y="217.77" width="154.1" height="1.25"/>
<rect x="263.3" y="220.09" width="154.1" height="1.25"/>
<rect x="263.3" y="222.40" width="154.1" height="1.25"/>
<rect x="263.3" y="227.03" width="154.1" height="1.25"/>
<rect x="263.3" y="229.34" width="154.1" height="1.25"/>
<rect x="263.3" y="231.65" width="154.1" height="1.25"/>
<rect x="263.3" y="236.28" width="154.1" height="1.25"/>
<rect x="263.3" y="238.59" width="154.1" height="1.25"/>
<rect x="263.3" y="240.90" width="154.1" height="1.25"/>
<rect x="263.3" y="245.53" width="154.1" height="1.25"/>
<rect x="263.3" y="247.85" width="154.1" height="1.25"/>
<rect x="263.3" y="250.16" width="154.1" height="1.25"/>
<rect x="263.3" y="254.79" width="154.1" height="1.25"/>
<rect x="263.3" y="257.10" width="154.1" height="1.25"/>
<rect x="263.3" y="259.41" width="154.1" height="1.25"/>
<rect x="263.3" y="264.04" width="154.1" height="1.25"/>
<rect x="263.3" y="266.35" width="154.1" height="1.25"/>
<rect x="263.3" y="268.66" width="154.1" height="1.25"/>
<rect x="263.3" y="273.29" width="154.1" height="1.25"/>
<rect x="263.3" y="275.61" width="154.1" height="1.25"/>
<rect x="263.3" y="277.92" width="154.1" height="1.25"/>
<rect x="263.3" y="282.55" width="154.1" height="1.25"/>
<rect x="263.3" y="284.86" width="154.1" height="1.25"/>
<rect x="263.3" y="287.17" width="154.1" height="1.25"/>
<rect x="263.3" y="291.80" width="154.1" height="1.25"/>
<rect x="263.3" y="294.11" width="154.1" height="1.25"/>
<rect x="263.3" y="296.43" width="154.1" height="1.25"/>
<rect x="263.3" y="301.05" width="154.1" height="1.25"/>
<rect x="263.3" y="303.37" width="154.1" height="1.25"/>
<rect x="263.3" y="305.68" width="154.1" height="1.25"/>
<rect x="263.3" y="310.31" width="154.1" height="1.25"/>
<rect x="263.3" y="312.62" width="154.1" height="1.25"/>
<rect x="263.3" y="314.93" width="154.1" height="1.25"/>
<rect x="263.3" y="319.56" width="154.1" height="1.25"/>
<rect x="263.3" y="321.87" width="154.1" height="1.25"/>
<rect x="263.3" y="324.19" width="154.1" height="1.25"/>
<rect x="263.3" y="328.81" width="154.1" height="1.25"/>
<rect x="263.3" y="331.13" width="154.1" height="1.25"/>
<rect x="263.3" y="333.44" width="154.1" height="1.25"/>
<rect x="263.3" y="338.07" width="154.1" height="1.25"/>
<rect x="263.3" y="340.38" width="154.1" height="1.25"/>
<rect x="263.3" y="342.69" width="154.1" height="1.25"/>
<rect x="263.3" y="347.32" width="154.1" height="1.25"/>
<rect x="263.3" y="349.63" width="154.1" height="1.25"/>
<rect x="263.3" y="351.95" width="154.1" height="1.25"/>
<rect x="263.3" y="356.57" width="154.1" height="1.25"/>
<rect x="263.3" y="358.89" width="154.1" height="1.25"/>
<rect x="263.3" y="361.20" width="154.1" height="1.25"/>
<rect x="263.3" y="365.83" width="154.1" height="1.25"/>
<rect x="263.3" y="368.14" width="154.1" height="1.25"/>
<rect x="263.3" y="370.45" width="154.1" height="1.25"/>
<rect x="263.3" y="375.08" width="154.1" height="1.25"/>
<rect x="263.3" y="377.39" width="154.1" height="1.25"/>
<rect x="263.3" y="379.71" width="154.1" height="1.25"/>
<rect x="263.3" y="384.33" width="154.1" height="1.25"/>
<rect x="263.3" y="386.65" width="154.1" height="1.25"/>
<rect x="263.3" y="388.96" width="154.1" height="1.25"/>
<rect x="263.3" y="393.59" width="154.1" height="1.25"/>
<rect x="263.3" y="395.90" width="154.1" height="1.25"/>
<rect x="263.3" y="398.21" width="154.1" height="1.25"/>
<rect x="263.3" y="402.84" width="154.1" height="1.25"/>
<rect x="263.3" y="405.15" width="154.1" height="1.25"/>
<rect x="263.3" y="407.47" width="154.1" height="1.25"/>
</g><g fill="#000">
<rect x="244.5" y="197.00" width="172.9" height="1.15"/>
<rect x="244.5" y="206.26" width="172.9" height="1.15"/>
<rect x="244.5" y="215.51" width="172.9" height="1.15"/>
<rect x="244.5" y="224.76" width="172.9" height="1.15"/>
<rect x="244.5" y="234.02" width="172.9" height="1.15"/>
<rect x="244.5" y="243.27" width="172.9" height="1.15"/>
<rect x="244.5" y="252.52" width="172.9" height="1.15"/>
<rect x="244.5" y="261.78" width="172.9" height="1.15"/>
<rect x="244.5" y="271.03" width="172.9" height="1.15"/>
<rect x="244.5" y="280.28" width="172.9" height="1.15"/>
<rect x="244.5" y="289.54" width="172.9" height="1.15"/>
<rect x="244.5" y="298.79" width="172.9" height="1.15"/>
<rect x="244.5" y="308.04" width="172.9" height="1.15"/>
<rect x="244.5" y="317.30" width="172.9" height="1.15"/>
<rect x="244.5" y="326.55" width="172.9" height="1.15"/>
<rect x="244.5" y="335.80" width="172.9" height="1.15"/>
<rect x="244.5" y="345.06" width="172.9" height="1.15"/>
<rect x="244.5" y="354.31" width="172.9" height="1.15"/>
<rect x="244.5" y="363.56" width="172.9" height="1.15"/>
<rect x="244.5" y="372.82" width="172.9" height="1.15"/>
<rect x="244.5" y="382.07" width="172.9" height="1.15"/>
<rect x="244.5" y="391.32" width="172.9" height="1.15"/>
<rect x="244.5" y="400.58" width="172.9" height="1.15"/>
<rect x="244.5" y="409.83" width="172.9" height="1.15"/>
<rect x="262.8" y="188.3" width="1.1" height="222.1"/>
<rect x="276.7" y="188.3" width="1.1" height="222.1"/>
<rect x="290.7" y="188.3" width="1.1" height="222.1"/>
<rect x="304.5" y="188.3" width="1.1" height="222.1"/>
<rect x="318.4" y="188.3" width="1.1" height="222.1"/>
<rect x="332.2" y="188.3" width="1.1" height="222.1"/>
<rect x="346.1" y="188.3" width="1.1" height="222.1"/>
<rect x="359.9" y="188.3" width="1.1" height="222.1"/>
<rect x="369.3" y="188.3" width="1.1" height="222.1"/>
</g>
<rect x="253.7" y="188.3" width="0.5" height="222.1" fill="#555"/>
<rect x="244.8" y="188.90" width="17.9" height="1.6" fill="#9bd4ee" opacity="0.8"/>
<rect x="244.8" y="198.15" width="17.9" height="1.6" fill="#9bd4ee" opacity="0.8"/>
<rect x="244.8" y="207.41" width="17.9" height="1.6" fill="#9bd4ee" opacity="0.8"/>
<rect x="244.8" y="216.66" width="17.9" height="1.6" fill="#9bd4ee" opacity="0.8"/>
<rect x="244.8" y="225.91" width="17.9" height="1.6" fill="#9bd4ee" opacity="0.8"/>
<rect x="244.8" y="235.17" width="17.9" height="1.6" fill="#9bd4ee" opacity="0.8"/>
<rect x="244.8" y="244.42" width="17.9" height="1.6" fill="#9bd4ee" opacity="0.8"/>
<rect x="244.8" y="253.67" width="17.9" height="1.6" fill="#9bd4ee" opacity="0.8"/>
<rect x="244.8" y="262.93" width="17.9" height="1.6" fill="#9bd4ee" opacity="0.8"/>
<rect x="244.8" y="272.18" width="17.9" height="1.6" fill="#9bd4ee" opacity="0.8"/>
<rect x="244.8" y="281.43" width="17.9" height="1.6" fill="#9bd4ee" opacity="0.8"/>
<rect x="244.8" y="290.69" width="17.9" height="1.6" fill="#9bd4ee" opacity="0.8"/>
<rect x="244.8" y="299.94" width="17.9" height="1.6" fill="#9bd4ee" opacity="0.8"/>
<rect x="244.8" y="309.19" width="17.9" height="1.6" fill="#9bd4ee" opacity="0.8"/>
<rect x="244.8" y="318.45" width="17.9" height="1.6" fill="#9bd4ee" opacity="0.8"/>
<rect x="244.8" y="327.70" width="17.9" height="1.6" fill="#9bd4ee" opacity="0.8"/>
<rect x="244.8" y="336.95" width="17.9" height="1.6" fill="#9bd4ee" opacity="0.8"/>
<rect x="244.8" y="346.21" width="17.9" height="1.6" fill="#9bd4ee" opacity="0.8"/>
<rect x="244.8" y="355.46" width="17.9" height="1.6" fill="#9bd4ee" opacity="0.8"/>
<rect x="244.8" y="364.71" width="17.9" height="1.6" fill="#9bd4ee" opacity="0.8"/>
<rect x="244.8" y="373.97" width="17.9" height="1.6" fill="#9bd4ee" opacity="0.8"/>
<rect x="244.8" y="383.22" width="17.9" height="1.6" fill="#9bd4ee" opacity="0.8"/>
<rect x="244.8" y="392.47" width="17.9" height="1.6" fill="#9bd4ee" opacity="0.8"/>
<rect x="244.8" y="401.73" width="17.9" height="1.6" fill="#9bd4ee" opacity="0.8"/>
<rect x="244.5" y="187.5" width="172.9" height="1.6" fill="#118acf"/>
<g fill="#999"><rect x="301" y="416" width="59" height="0.6"/><rect x="289" y="418.4" width="83" height="0.6"/><rect x="243" y="420.6" width="19" height="0.6"/></g>
<g clip-path="url(#t1c)"><g transform="translate(150.47 137.98) scale(0.1485) translate(778.5 1783.3) rotate(-50)" opacity="0.34"><text transform="scale(0.85 1)" x="0 269.4 560.9 837.3 1143.6 1286.5 1542.2" y="0" font-size="399" font-family="DejaVu Sans, Liberation Sans, sans-serif" fill="#bebebe" stroke="#bebebe" stroke-width="3" stroke-linejoin="round" filter="url(#rnd)">PREVIEW</text></g></g>
<text x="331" y="475.8" font-size="26" fill="#fff" stroke="#fff" stroke-width="0.5" text-anchor="middle">1</text>
<clipPath id="t2c"><rect x="225" y="526" width="212" height="275"/></clipPath><rect x="225" y="526" width="212" height="275" fill="#fff"/>
<g fill="none" stroke="#b5d88a" stroke-width="0.6"><path d="M242.2 535.6V530.9H247.6L249.9 533.7V535.6"/></g>
<text x="242.0" y="538.6" font-size="3.5" fill="#a9d17a" textLength="15.2" lengthAdjust="spacingAndGlyphs">consulting</text>
<text x="257.5" y="538.6" font-size="3.5" fill="#999" textLength="4.2" lengthAdjust="spacingAndGlyphs">Kit</text>
<text x="317.9" y="538.4" font-size="1.9" font-weight="bold" fill="#666" textLength="26.8" lengthAdjust="spacingAndGlyphs">Contractor Monthly Timesheet</text>
<g fill="#999"><rect x="397" y="534.2" width="22" height="0.7"/><rect x="393.5" y="536.5" width="25.5" height="0.7"/><rect x="404" y="538.8" width="15" height="0.7"/></g>
<rect x="360.4" y="545.0" width="9.4" height="68.7" fill="#d3eefa"/>
<rect x="277.2" y="610.3" width="83.2" height="3.2" fill="#d3eefa"/>
<g fill="#444" opacity="0.68">
<rect x="263.3" y="546.93" width="154.1" height="0.8"/>
<rect x="263.3" y="549.26" width="154.1" height="0.8"/>
<rect x="263.3" y="551.59" width="154.1" height="0.8"/>
<rect x="263.3" y="556.26" width="154.1" height="0.8"/>
<rect x="263.3" y="558.59" width="154.1" height="0.8"/>
<rect x="263.3" y="560.92" width="154.1" height="0.8"/>
<rect x="263.3" y="565.59" width="154.1" height="0.8"/>
<rect x="263.3" y="567.92" width="154.1" height="0.8"/>
<rect x="263.3" y="570.25" width="154.1" height="0.8"/>
<rect x="263.3" y="574.92" width="154.1" height="0.8"/>
<rect x="263.3" y="577.25" width="154.1" height="0.8"/>
<rect x="263.3" y="579.58" width="154.1" height="0.8"/>
<rect x="263.3" y="584.25" width="154.1" height="0.8"/>
<rect x="263.3" y="586.58" width="154.1" height="0.8"/>
<rect x="263.3" y="588.91" width="154.1" height="0.8"/>
<rect x="263.3" y="593.58" width="154.1" height="0.8"/>
<rect x="263.3" y="595.91" width="154.1" height="0.8"/>
<rect x="263.3" y="598.24" width="154.1" height="0.8"/>
<rect x="263.3" y="602.90" width="154.1" height="0.8"/>
<rect x="263.3" y="605.24" width="154.1" height="0.8"/>
<rect x="263.3" y="607.57" width="154.1" height="0.8"/>
</g><g fill="#444">
<rect x="263.3" y="544.50" width="154.1" height="1"/>
<rect x="244.5" y="553.83" width="172.9" height="1"/>
<rect x="244.5" y="563.16" width="172.9" height="1"/>
<rect x="244.5" y="572.49" width="172.9" height="1"/>
<rect x="244.5" y="581.82" width="172.9" height="1"/>
<rect x="244.5" y="591.14" width="172.9" height="1"/>
<rect x="244.5" y="600.47" width="172.9" height="1"/>
<rect x="244.5" y="609.80" width="172.9" height="1"/>
<rect x="262.8" y="545.0" width="1" height="68.7"/>
<rect x="276.7" y="545.0" width="1" height="68.7"/>
<rect x="290.7" y="545.0" width="1" height="68.7"/>
<rect x="304.6" y="545.0" width="1" height="68.7"/>
<rect x="318.4" y="545.0" width="1" height="68.7"/>
<rect x="332.3" y="545.0" width="1" height="68.7"/>
<rect x="346.1" y="545.0" width="1" height="68.7"/>
<rect x="359.9" y="545.0" width="1" height="68.7"/>
<rect x="369.4" y="545.0" width="1" height="68.7"/>
<rect x="254.0" y="613.3" width="115.9" height="0.9"/>
<rect x="253.7" y="545.0" width="0.6" height="68.7" fill="#777"/>
</g>
<rect x="244.8" y="545.60" width="17.9" height="1.6" fill="#bfe3f5" opacity="0.8"/>
<rect x="244.8" y="554.93" width="17.9" height="1.6" fill="#bfe3f5" opacity="0.8"/>
<rect x="244.8" y="564.26" width="17.9" height="1.6" fill="#bfe3f5" opacity="0.8"/>
<rect x="244.8" y="573.59" width="17.9" height="1.6" fill="#bfe3f5" opacity="0.8"/>
<rect x="244.8" y="582.92" width="17.9" height="1.6" fill="#bfe3f5" opacity="0.8"/>
<rect x="244.8" y="592.24" width="17.9" height="1.6" fill="#bfe3f5" opacity="0.8"/>
<rect x="244.8" y="601.57" width="17.9" height="1.6" fill="#bfe3f5" opacity="0.8"/>
<g fill="#888"><rect x="244.5" y="618" width="121" height="0.6"/><rect x="244.5" y="620.4" width="84" height="0.6"/><rect x="244.5" y="625.3" width="61" height="0.6"/></g>
<rect x="244.8" y="626.8" width="124.6" height="15.6" fill="#fff" stroke="#555" stroke-width="1"/>
<g fill="#aaa"><rect x="301" y="787" width="59" height="0.6"/><rect x="289" y="789.4" width="83" height="0.6"/><rect x="243" y="791.6" width="19" height="0.6"/></g>
<g clip-path="url(#t2c)"><g transform="translate(150.47 508.98) scale(0.1485) translate(778.5 1783.3) rotate(-50)" opacity="0.24"><text transform="scale(0.85 1)" x="0 269.4 560.9 837.3 1143.6 1286.5 1542.2" y="0" font-size="399" font-family="DejaVu Sans, Liberation Sans, sans-serif" fill="#bebebe" stroke="#bebebe" stroke-width="3" stroke-linejoin="round" filter="url(#rnd)">PREVIEW</text></g></g>
<text x="331" y="847.2" font-size="26" fill="#fff" stroke="#fff" stroke-width="0.5" text-anchor="middle">2</text>
<rect x="0" y="0" width="1536" height="108" fill="#3c3c3c"/>
<g fill="#f4f4f4"><rect x="50" y="43.2" width="28" height="3"/><rect x="50" y="51.3" width="28" height="3"/><rect x="50" y="59.4" width="28" height="3"/></g>
<text x="127.5" y="62.5" font-size="27" fill="#fff" stroke="#fff" stroke-width="0.9" textLength="316.5" lengthAdjust="spacingAndGlyphs">CK_CT_6110_M_1_0_Ti...</text>
<rect x="508.8" y="33" width="51" height="39.5" fill="#1f1f1f"/>
<text x="534" y="62.5" font-size="26" fill="#fff" text-anchor="middle" stroke="#fff" stroke-width="0.3">1</text>
<text x="570.5" y="65" font-size="31" fill="#fff" text-anchor="middle">/</text>
<text x="599.5" y="62.5" font-size="26" fill="#fff" text-anchor="middle" stroke="#fff" stroke-width="0.3">2</text>
<rect x="656.4" y="33" width="1.5" height="39.5" fill="#858585"/>
<rect x="686.9" y="51.9" width="20.6" height="2.6" fill="#f4f4f4"/>
<rect x="736.2" y="33" width="98.5" height="39.5" fill="#1f1f1f"/>
<text x="785.2" y="62.5" font-size="26" fill="#fff" text-anchor="middle" stroke="#fff" stroke-width="0.3" textLength="55.3" lengthAdjust="spacingAndGlyphs">90%</text>
<rect x="863.8" y="52.2" width="20.6" height="2.6" fill="#f4f4f4"/><rect x="872.8" y="43.2" width="2.6" height="20.6" fill="#f4f4f4"/>
<rect x="913.7" y="33" width="1.5" height="39.5" fill="#858585"/>
<rect x="960.1" y="38.7" width="20.4" height="28.6" rx="2.6" fill="none" stroke="#f4f4f4" stroke-width="3"/>
<path d="M965.3 48.2H975.3L970.3 43.3ZM965.3 58H975.3L970.3 62.9Z" fill="#f4f4f4"/>
<path transform="translate(1013.6 73.34) scale(0.04015)" fill="#f4f4f4" d="M520-80q-51 0-100-14t-92-42l58-58q31 17 65 25.500t69 8.500q117 0 198.500-81.500T800-440q0-117-81.500-198.500T520-720h-6l62 62-56 58-160-160 160-160 56 58-62 62h6q75 0 140.500 28.500t114 77q48.500 48.500 77 114T880-440q0 75-28.500 140.500t-77 114q-48.500 48.500-114 77T520-80ZM280-200 40-440l240-240 240 240-240 240Zm0-114 126-126-126-126-126 126 126 126Z"/>
<g fill="none" stroke="#f4f4f4" stroke-width="3"><path d="M1367.9 38.9V56"/><path d="M1360.3 49.2L1367.9 56.8L1375.5 49.2"/><path d="M1357.7 58.6V61.4a2 2 0 0 0 2 2H1376.5a2 2 0 0 0 2-2V58.6"/></g>
<path transform="translate(1419.8 72.7) scale(0.04015)" fill="#f4f4f4" d="M640-640v-120H320v120h-80v-200h480v200h-80Zm-480 80h640-640Zm560 100q17 0 28.500-11.500T760-500q0-17-11.500-28.500T720-540q-17 0-28.500 11.500T680-500q0 17 11.500 28.500T720-460Zm-80 260v-160H320v160h320Zm80 80H240v-160H80v-240q0-51 35-85.500t85-34.500h560q51 0 85.500 34.500T880-520v240H720v160Zm80-240v-160q0-17-11.500-28.500T760-560H200q-17 0-28.500 11.500T160-520v160h80v-80h480v80h80Z"/>
<g fill="#f4f4f4"><circle cx="1509.4" cy="44.3" r="3.2"/><circle cx="1509.4" cy="53.2" r="3.2"/><circle cx="1509.4" cy="62" r="3.2"/></g>
<rect x="0" y="0" width="1.2" height="1259" fill="#000" opacity="0.28"/>
</svg></body></html>
